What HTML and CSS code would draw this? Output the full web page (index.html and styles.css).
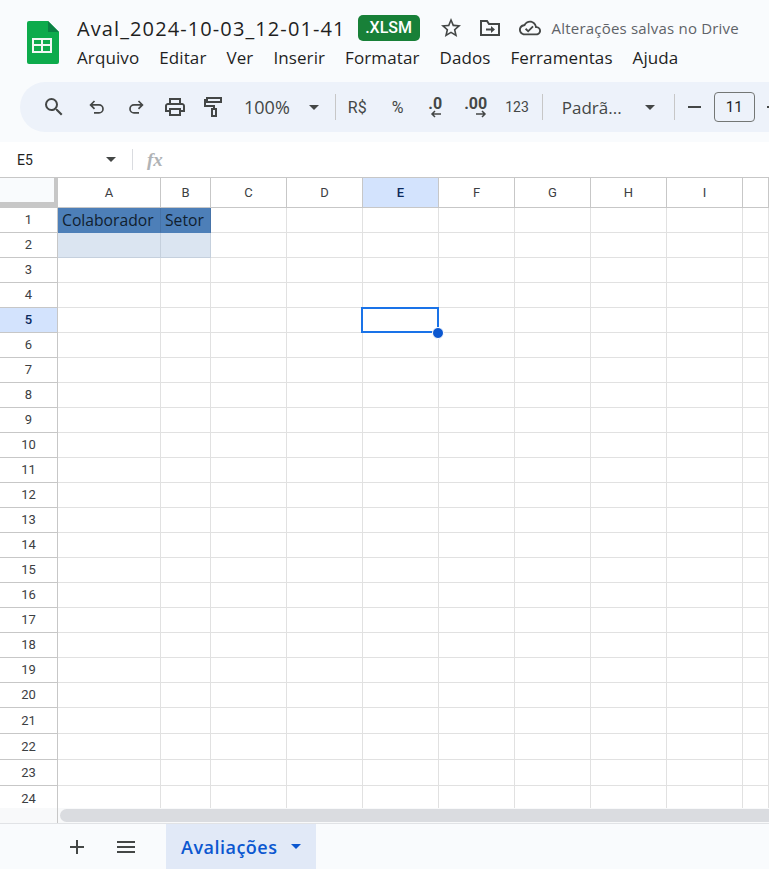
FILE: index.html
```html
<!DOCTYPE html>
<html lang="pt-BR">
<head>
    <meta charset="UTF-8">
    <title>Aval_2024-10-03_12-01-41</title>
    <link rel="stylesheet" href="styles.css">
</head>
<body>
    <!-- Title and menus -->
    <header class="title-bar">
        <svg class="sheets-logo" width="32" height="43" viewBox="0 0 32 43">
            <path fill="#0dab4c" d="M2 0h19l11 11v30a2 2 0 0 1-2 2H2a2 2 0 0 1-2-2V2a2 2 0 0 1 2-2z"/>
            <path fill="#0a8043" d="M21 0l11 11H21z"/>
            <path fill="#f1f8f3" fill-rule="evenodd" d="M5 17h20v15H5zM7 19v4h7v-4zM16 19v4h7v-4zM7 25v5h7v-5zM16 25v5h7v-5z"/>
        </svg>
        <div class="title-text">
            <div class="title-row">
                <span class="doc-name">Aval_2024-10-03_12-01-41</span>
                <span class="xlsm-badge">.XLSM</span>
                <svg class="star-icon" width="24" height="24" viewBox="0 0 24 24"><path fill="#444746" d="M22 9.24l-7.19-.62L12 2 9.19 8.63 2 9.24l5.46 4.73L5.82 21 12 17.27 18.18 21l-1.63-7.03L22 9.24zM12 15.4l-3.76 2.27 1-4.28-3.32-2.88 4.38-.38L12 6.1l1.71 4.04 4.38.38-3.32 2.88 1 4.28L12 15.4z"/></svg>
                <svg class="move-icon" width="24" height="24" viewBox="0 0 24 24"><path fill="none" stroke="#444746" stroke-width="2" d="M3 19V5h6l2 3h10v11z"/><path fill="#444746" d="M8 12.500h5V10l4 3.500-4 3.500v-2.500H8z"/></svg>
                <svg class="cloud-icon" width="22" height="22" viewBox="0 0 24 24"><path fill="#444746" d="M19.35 10.04C18.67 6.59 15.64 4 12 4 9.11 4 6.6 5.64 5.35 8.04 2.34 8.36 0 10.91 0 14c0 3.31 2.69 6 6 6h13c2.76 0 5-2.24 5-5 0-2.64-2.05-4.78-4.65-4.96zM19 18H6c-2.21 0-4-1.79-4-4 0-2.05 1.53-3.76 3.56-3.97l1.07-.11.5-.95C8.08 7.14 9.94 6 12 6c2.62 0 4.88 1.86 5.39 4.43l.3 1.5 1.53.11c1.56.1 2.78 1.41 2.78 2.96 0 1.65-1.35 3-3 3zm-9-3.82l-2.09-2.09L6.5 13.5 10 17l6.01-6.01-1.41-1.41z"/></svg>
                <span class="save-status">Alterações salvas no Drive</span>
            </div>
            <nav class="menu-row">
                <span>Arquivo</span>
                <span>Editar</span>
                <span>Ver</span>
                <span>Inserir</span>
                <span>Formatar</span>
                <span>Dados</span>
                <span>Ferramentas</span>
                <span>Ajuda</span>
            </nav>
        </div>
    </header>

    <!-- Toolbar pill, runs off the right side -->
    <div class="toolbar">
        <svg class="tool-search" width="24" height="24" viewBox="0 0 24 24"><path fill="#444746" d="M15.5 14h-.79l-.28-.27A6.471 6.471 0 0 0 16 9.5 6.5 6.5 0 1 0 9.5 16c1.61 0 3.09-.59 4.23-1.57l.27.28v.79l5 4.99L20.49 19l-4.99-5zm-6 0C7.01 14 5 11.99 5 9.5S7.01 5 9.5 5 14 7.01 14 9.5 11.99 14 9.5 14z"/></svg>
        <svg class="tool-undo" width="20" height="20" viewBox="0 0 20 20"><path fill="none" stroke="#444746" stroke-width="1.7" d="M7.5 4L3.6 7.9l3.9 3.9M3.6 7.9H12a4 4 0 0 1 0 8H7"/></svg>
        <svg class="tool-redo" width="20" height="20" viewBox="0 0 20 20"><path fill="none" stroke="#444746" stroke-width="1.7" d="M12.5 4l3.9 3.9-3.9 3.9M16.4 7.9H8a4 4 0 0 0 0 8h5"/></svg>
        <svg class="tool-print" width="24" height="24" viewBox="0 0 24 24"><path fill="#444746" d="M19 8h-1V3H6v5H5c-1.66 0-3 1.34-3 3v6h4v4h12v-4h4v-6c0-1.66-1.34-3-3-3zM8 5h8v3H8V5zm8 12v2H8v-4h8v2zm2-2v-2H6v2H4v-4c0-.55.45-1 1-1h14c.55 0 1 .45 1 1v4h-2z"/></svg>
        <svg class="tool-paint" width="20" height="24" viewBox="0 0 20 24"><path fill="none" stroke="#444746" stroke-width="2" d="M4 3h14v4H4zM4 5H2v6h9v3M9 14h4v7H9z"/></svg>
        <span class="tool-zoom">100%</span>
        <span class="caret tool-zoom-caret"></span>
        <span class="tool-sep"></span>
        <span class="tool-text tool-currency">R$</span>
        <span class="tool-text tool-percent">%</span>
        <span class="tool-decimal tool-dec-less">.0<svg width="12" height="8" viewBox="0 0 12 8"><path fill="none" stroke="#444746" stroke-width="1.5" d="M11 4H2M5 1L2 4l3 3"/></svg></span>
        <span class="tool-decimal tool-dec-more">.00<svg width="12" height="8" viewBox="0 0 12 8"><path fill="none" stroke="#444746" stroke-width="1.5" d="M1 4h9M7 1l3 3-3 3"/></svg></span>
        <span class="tool-text tool-format">123</span>
        <span class="tool-sep tool-sep-b"></span>
        <span class="tool-font">Padrã...</span>
        <span class="caret tool-font-caret"></span>
        <span class="tool-sep tool-sep-c"></span>
        <span class="tool-minus"></span>
        <span class="tool-size">11</span>
        <span class="tool-plus"></span>
    </div>

    <!-- Name box and formula -->
    <div class="formula-bar">
        <span class="name-box">E5</span>
        <span class="caret name-caret"></span>
        <span class="formula-sep"></span>
        <span class="fx">fx</span>
    </div>

    <!-- Grid -->
    <div class="grid-wrap">
        <table class="grid">
            <colgroup>
                <col class="col-head"><col class="col-a"><col class="col-b"><col class="col-n"><col class="col-n"><col class="col-n"><col class="col-n"><col class="col-n"><col class="col-n"><col class="col-n"><col class="col-end">
            </colgroup>
            <thead>
                <tr><th class="corner"></th><th>A</th><th>B</th><th>C</th><th>D</th><th class="on">E</th><th>F</th><th>G</th><th>H</th><th>I</th><th></th></tr>
            </thead>
            <tbody>
                <tr><th>1</th><td class="band-head">Colaborador</td><td class="band-head">Setor</td><td></td><td></td><td></td><td></td><td></td><td></td><td></td><td></td></tr>
                <tr><th>2</th><td class="band-row"></td><td class="band-row"></td><td></td><td></td><td></td><td></td><td></td><td></td><td></td><td></td></tr>
                <tr><th>3</th><td></td><td></td><td></td><td></td><td></td><td></td><td></td><td></td><td></td><td></td></tr>
                <tr><th>4</th><td></td><td></td><td></td><td></td><td></td><td></td><td></td><td></td><td></td><td></td></tr>
                <tr><th class="on">5</th><td></td><td></td><td></td><td></td><td></td><td></td><td></td><td></td><td></td><td></td></tr>
                <tr><th>6</th><td></td><td></td><td></td><td></td><td></td><td></td><td></td><td></td><td></td><td></td></tr>
                <tr><th>7</th><td></td><td></td><td></td><td></td><td></td><td></td><td></td><td></td><td></td><td></td></tr>
                <tr><th>8</th><td></td><td></td><td></td><td></td><td></td><td></td><td></td><td></td><td></td><td></td></tr>
                <tr><th>9</th><td></td><td></td><td></td><td></td><td></td><td></td><td></td><td></td><td></td><td></td></tr>
                <tr><th>10</th><td></td><td></td><td></td><td></td><td></td><td></td><td></td><td></td><td></td><td></td></tr>
                <tr><th>11</th><td></td><td></td><td></td><td></td><td></td><td></td><td></td><td></td><td></td><td></td></tr>
                <tr><th>12</th><td></td><td></td><td></td><td></td><td></td><td></td><td></td><td></td><td></td><td></td></tr>
                <tr><th>13</th><td></td><td></td><td></td><td></td><td></td><td></td><td></td><td></td><td></td><td></td></tr>
                <tr><th>14</th><td></td><td></td><td></td><td></td><td></td><td></td><td></td><td></td><td></td><td></td></tr>
                <tr><th>15</th><td></td><td></td><td></td><td></td><td></td><td></td><td></td><td></td><td></td><td></td></tr>
                <tr><th>16</th><td></td><td></td><td></td><td></td><td></td><td></td><td></td><td></td><td></td><td></td></tr>
                <tr><th>17</th><td></td><td></td><td></td><td></td><td></td><td></td><td></td><td></td><td></td><td></td></tr>
                <tr><th>18</th><td></td><td></td><td></td><td></td><td></td><td></td><td></td><td></td><td></td><td></td></tr>
                <tr><th>19</th><td></td><td></td><td></td><td></td><td></td><td></td><td></td><td></td><td></td><td></td></tr>
                <tr><th>20</th><td></td><td></td><td></td><td></td><td></td><td></td><td></td><td></td><td></td><td></td></tr>
                <tr class="row-tall"><th>21</th><td></td><td></td><td></td><td></td><td></td><td></td><td></td><td></td><td></td><td></td></tr>
                <tr class="row-tall"><th>22</th><td></td><td></td><td></td><td></td><td></td><td></td><td></td><td></td><td></td><td></td></tr>
                <tr class="row-tall"><th>23</th><td></td><td></td><td></td><td></td><td></td><td></td><td></td><td></td><td></td><td></td></tr>
                <tr class="row-tall"><th>24</th><td></td><td></td><td></td><td></td><td></td><td></td><td></td><td></td><td></td><td></td></tr>
            </tbody>
        </table>
        <div class="selection"><span class="handle"></span></div>
    </div>

    <div class="scroll-row">
        <div class="scroll-stub"></div>
        <div class="scroll-thumb"></div>
    </div>

    <!-- Sheet tabs -->
    <footer class="tabs">
        <svg class="tab-add" width="24" height="24" viewBox="0 0 24 24"><path fill="#444746" d="M19 13h-6v6h-2v-6H5v-2h6V5h2v6h6z"/></svg>
        <svg class="tab-list" width="24" height="24" viewBox="0 0 24 24"><path fill="#444746" d="M3 18h18v-2H3zM3 13h18v-2H3zM3 6v2h18V6z"/></svg>
        <div class="tab-active">
            <span>Avaliações</span>
            <span class="caret tab-caret"></span>
        </div>
    </footer>
</body>
</html>
```

FILE: styles.css
```css
:root {
    --ink: #1f1f1f;
    --icon: #444746;
    --chrome: #f9fbfd;
    --line: #e1e1e1;
    --head-line: #c7c7c7;
    --blue: #0b57d0;
}

html, body {
    margin: 0;
    height: 100%;
    overflow: hidden;
}

body {
    width: 769px;
    height: 869px;
    background: var(--chrome);
    color: var(--ink);
    font-family: "Open Sans", "Noto Sans", sans-serif;
    display: flex;
    flex-direction: column;
}

/* Title bar */
.title-bar {
    height: 82px;
    flex: none;
    display: flex;
    align-items: flex-start;
    padding-left: 27px;
    box-sizing: border-box;
}

.sheets-logo {
    flex: none;
    margin-top: 21px;
}

.title-text {
    margin-left: 18px;
}

.title-row {
    height: 30px;
    margin-top: 13px;
    display: flex;
    align-items: center;
    white-space: nowrap;
}

.doc-name {
    font-size: 20px;
    letter-spacing: 1.1px;
}

.xlsm-badge {
    margin-left: 12px;
    width: 62px;
    height: 26px;
    line-height: 26px;
    text-align: center;
    background: #188038;
    color: #fff;
    border-radius: 5px;
    font-size: 16px;
    font-weight: 500;
    font-family: Roboto, sans-serif;
}

.star-icon { margin-left: 19px; }
.move-icon { margin-left: 15px; }
.cloud-icon { margin-left: 17px; }

.save-status {
    margin-left: 11px;
    font-size: 15px;
    letter-spacing: 0.2px;
    color: #5f6368;
}

.menu-row {
    display: flex;
    gap: 20px;
    margin-top: 1px;
    font-size: 17px;
    letter-spacing: 0.1px;
    line-height: 28px;
    white-space: nowrap;
}

/* Toolbar */
.toolbar {
    flex: none;
    width: 749px;
    height: 50px;
    margin-left: 20px;
    background: #edf2fa;
    border-radius: 25px 0 0 25px;
    display: flex;
    align-items: center;
    overflow: hidden;
    color: var(--icon);
}

.toolbar > * {
    flex: none;
}

.tool-search { margin-left: 22px; }
.tool-undo { margin-left: 21px; }
.tool-redo { margin-left: 19px; }
.tool-print { margin-left: 17px; }
.tool-paint { margin-left: 16px; }

.tool-zoom {
    margin-left: 21px;
    font-size: 18px;
}

.caret {
    display: inline-block;
    width: 0;
    height: 0;
    border-left: 5px solid transparent;
    border-right: 5px solid transparent;
    border-top: 5px solid var(--icon);
}

.tool-zoom-caret { margin-left: 19px; }

.tool-sep {
    width: 1px;
    height: 26px;
    background: #c7c7c7;
    margin-left: 16px;
}

.tool-text {
    font-family: Roboto, sans-serif;
}

.tool-currency { margin-left: 12px; font-size: 16px; }
.tool-percent { margin-left: 25px; font-size: 16px; }
.tool-format { margin-left: 18px; font-size: 14px; }

.tool-decimal {
    display: flex;
    flex-direction: column;
    align-items: flex-end;
    font-family: Roboto, sans-serif;
    font-size: 16px;
    font-weight: 700;
    line-height: 14px;
}

.tool-decimal svg {
    display: block;
    margin-top: -1px;
}

.tool-dec-less { margin-left: 25px; }
.tool-dec-more { margin-left: 22px; }
.tool-sep-b { margin-left: 13px; }

.tool-font {
    margin-left: 19px;
    font-size: 17px;
}

.tool-font-caret { margin-left: 23px; }
.tool-sep-c { margin-left: 19px; }

.tool-minus {
    width: 13px;
    height: 2px;
    background: var(--icon);
    margin-left: 13px;
}

.tool-size {
    margin-left: 13px;
    width: 39px;
    height: 28px;
    line-height: 28px;
    border: 1px solid #747775;
    border-radius: 4px;
    text-align: center;
    font-size: 15px;
    font-family: Roboto, sans-serif;
    color: var(--ink);
}

.tool-plus {
    width: 10px;
    height: 2px;
    background: var(--icon);
    margin-left: 12px;
}

/* Formula bar */
.formula-bar {
    flex: none;
    height: 35px;
    margin-top: 10px;
    background: #fff;
    display: flex;
    align-items: center;
    border-bottom: 1px solid var(--head-line);
}

.name-box {
    margin-left: 17px;
    width: 89px;
    font-family: Roboto, sans-serif;
    font-size: 14px;
}

.formula-sep {
    width: 1px;
    height: 21px;
    background: #dadce0;
    margin-left: 16px;
}

.fx {
    margin-left: 14px;
    font-family: "Liberation Serif", serif;
    font-style: italic;
    font-weight: 700;
    font-size: 19px;
    color: #b0b3b6;
}

/* Grid */
.grid-wrap {
    position: relative;
    flex: none;
    height: 630px;
    overflow: hidden;
    background: #fff;
}

.grid {
    border-collapse: separate;
    border-spacing: 0;
    table-layout: fixed;
    width: 769px;
    font-family: Roboto, sans-serif;
}

.col-head { width: 58px; }
.col-a { width: 103px; }
.col-b { width: 50px; }
.col-n { width: 76px; }
.col-end { width: 26px; }

.grid th,
.grid td {
    padding: 0;
    box-sizing: border-box;
    height: 25px;
    border-right: 1px solid var(--line);
    border-bottom: 1px solid var(--line);
}

.grid .row-tall th,
.grid .row-tall td {
    height: 26px;
}

.grid thead th {
    height: 30px;
    background: #fff;
    font-size: 13px;
    font-weight: 400;
    color: #3c4043;
    border-right: 1px solid var(--head-line);
    border-bottom: 1px solid var(--head-line);
}

.grid tbody th {
    background: #fff;
    font-size: 13px;
    font-weight: 400;
    color: #3c4043;
    padding-bottom: 1px;
    border-right: 1px solid var(--head-line);
    border-bottom: 1px solid var(--head-line);
}

.grid thead th.corner {
    background: var(--chrome);
    border-right: 4px solid var(--head-line);
    border-bottom: 6px solid var(--head-line);
}

.grid th.on,
.grid thead th.on,
.grid tbody th.on {
    background: #d3e3fd;
    color: #0b2a5c;
    font-weight: 500;
}

.grid td.band-head {
    background: #4d7fb8;
    color: #10202f;
    font-family: "Open Sans", sans-serif;
    font-size: 15.7px;
    padding-left: 4px;
    white-space: nowrap;
    overflow: hidden;
    border-right-color: #4673a8;
    border-bottom-color: #4d7fb8;
}

.grid td.band-row {
    background: #dbe5f1;
    border-right-color: #c5d0dd;
    border-bottom-color: #c5d0dd;
}

.selection {
    position: absolute;
    left: 361px;
    top: 129px;
    width: 78px;
    height: 26px;
    border: 2px solid #1a73e8;
    box-sizing: border-box;
}

.handle {
    position: absolute;
    right: -7px;
    bottom: -8px;
    width: 10px;
    height: 10px;
    background: var(--blue);
    border: 1px solid #fff;
    border-radius: 50%;
}

/* Scrollbar row */
.scroll-row {
    flex: none;
    height: 15px;
    display: flex;
    background: #f8f9fa;
    border-bottom: 1px solid #e1e3e6;
}

.scroll-stub {
    width: 57px;
    border-right: 1px solid var(--head-line);
}

.scroll-thumb {
    flex: 1;
    margin: 1px 0 1px 2px;
    background: #dadce0;
    border-radius: 7px 0 0 7px;
}

/* Sheet tabs */
.tabs {
    flex: 1;
    display: flex;
    align-items: stretch;
    background: var(--chrome);
}

.tab-add {
    align-self: center;
    margin-left: 65px;
}

.tab-list {
    align-self: center;
    margin-left: 25px;
}

.tab-active {
    margin-left: 28px;
    width: 150px;
    background: #e1e9f7;
    color: var(--blue);
    display: flex;
    align-items: center;
    font-size: 18px;
    font-weight: 600;
    letter-spacing: 0.5px;
    padding-left: 15px;
    box-sizing: border-box;
}

.tab-caret {
    margin-left: 13px;
    border-top-color: var(--blue);
}
```
